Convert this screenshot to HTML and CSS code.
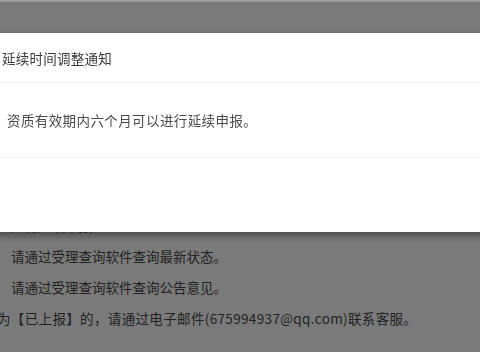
FILE: index.html
```html
<!DOCTYPE html>
<html lang="zh">
<head>
<meta charset="utf-8">
<link rel="stylesheet" href="styles.css">
</head>
<body>
<div class="page">
  <p class="cut-line">如需延续申报</p>
  <p class="line indent">请通过受理查询软件查询最新状态。</p>
  <p class="line indent">请通过受理查询软件查询公告意见。</p>
  <p class="line wide">为【已上报】的，请通过电子邮件(675994937@qq.com)联系客服。</p>
</div>
<div class="overlay">
  <div class="modal">
    <div class="modal-header">延续时间调整通知</div>
    <div class="modal-body">资质有效期内六个月可以进行延续申报。</div>
    <div class="modal-footer"></div>
  </div>
</div>
</body>
</html>
```
FILE: styles.css
```css
html, body {
  margin: 0;
  padding: 0;
  width: 480px;
  height: 352px;
  overflow: hidden;
  background: #ffffff;
  font-family: "Noto Sans CJK SC", "Noto Sans", sans-serif;
}

.page {
  padding-top: 210px;
  margin-left: -3px;
  font-size: 13.5px;
  color: #4a4a4a;
}

.page p {
  margin: 0;
  line-height: 31px;
  white-space: nowrap;
}

.cut-line {
  padding-left: 14px;
}

.indent {
  padding-left: 14px;
}

.wide {
  letter-spacing: 0.35px;
}

.overlay {
  position: fixed;
  top: 0;
  left: 0;
  right: 0;
  bottom: 0;
  background: rgba(0, 0, 0, 0.52);
  border-top: 2px solid rgba(255, 255, 255, 0.25);
  overflow: hidden;
}

.modal {
  margin-top: 31px;
  margin-left: -14px;
  width: 520px;
  background: #ffffff;
  box-shadow: 0 3px 8px rgba(0, 0, 0, 0.45);
}

.modal-header {
  height: 49px;
  padding: 0 16px;
  display: flex;
  align-items: center;
  font-size: 13.5px;
  letter-spacing: 0.25px;
  color: #3a3a3a;
  border-bottom: 1px solid #efefef;
}

.modal-body {
  height: 74px;
  padding: 0 21px;
  display: flex;
  align-items: center;
  font-size: 13.5px;
  letter-spacing: 0.4px;
  color: #4a4a4a;
  border-bottom: 1px solid #f4f4f4;
}

.modal-footer {
  height: 74px;
}
```
